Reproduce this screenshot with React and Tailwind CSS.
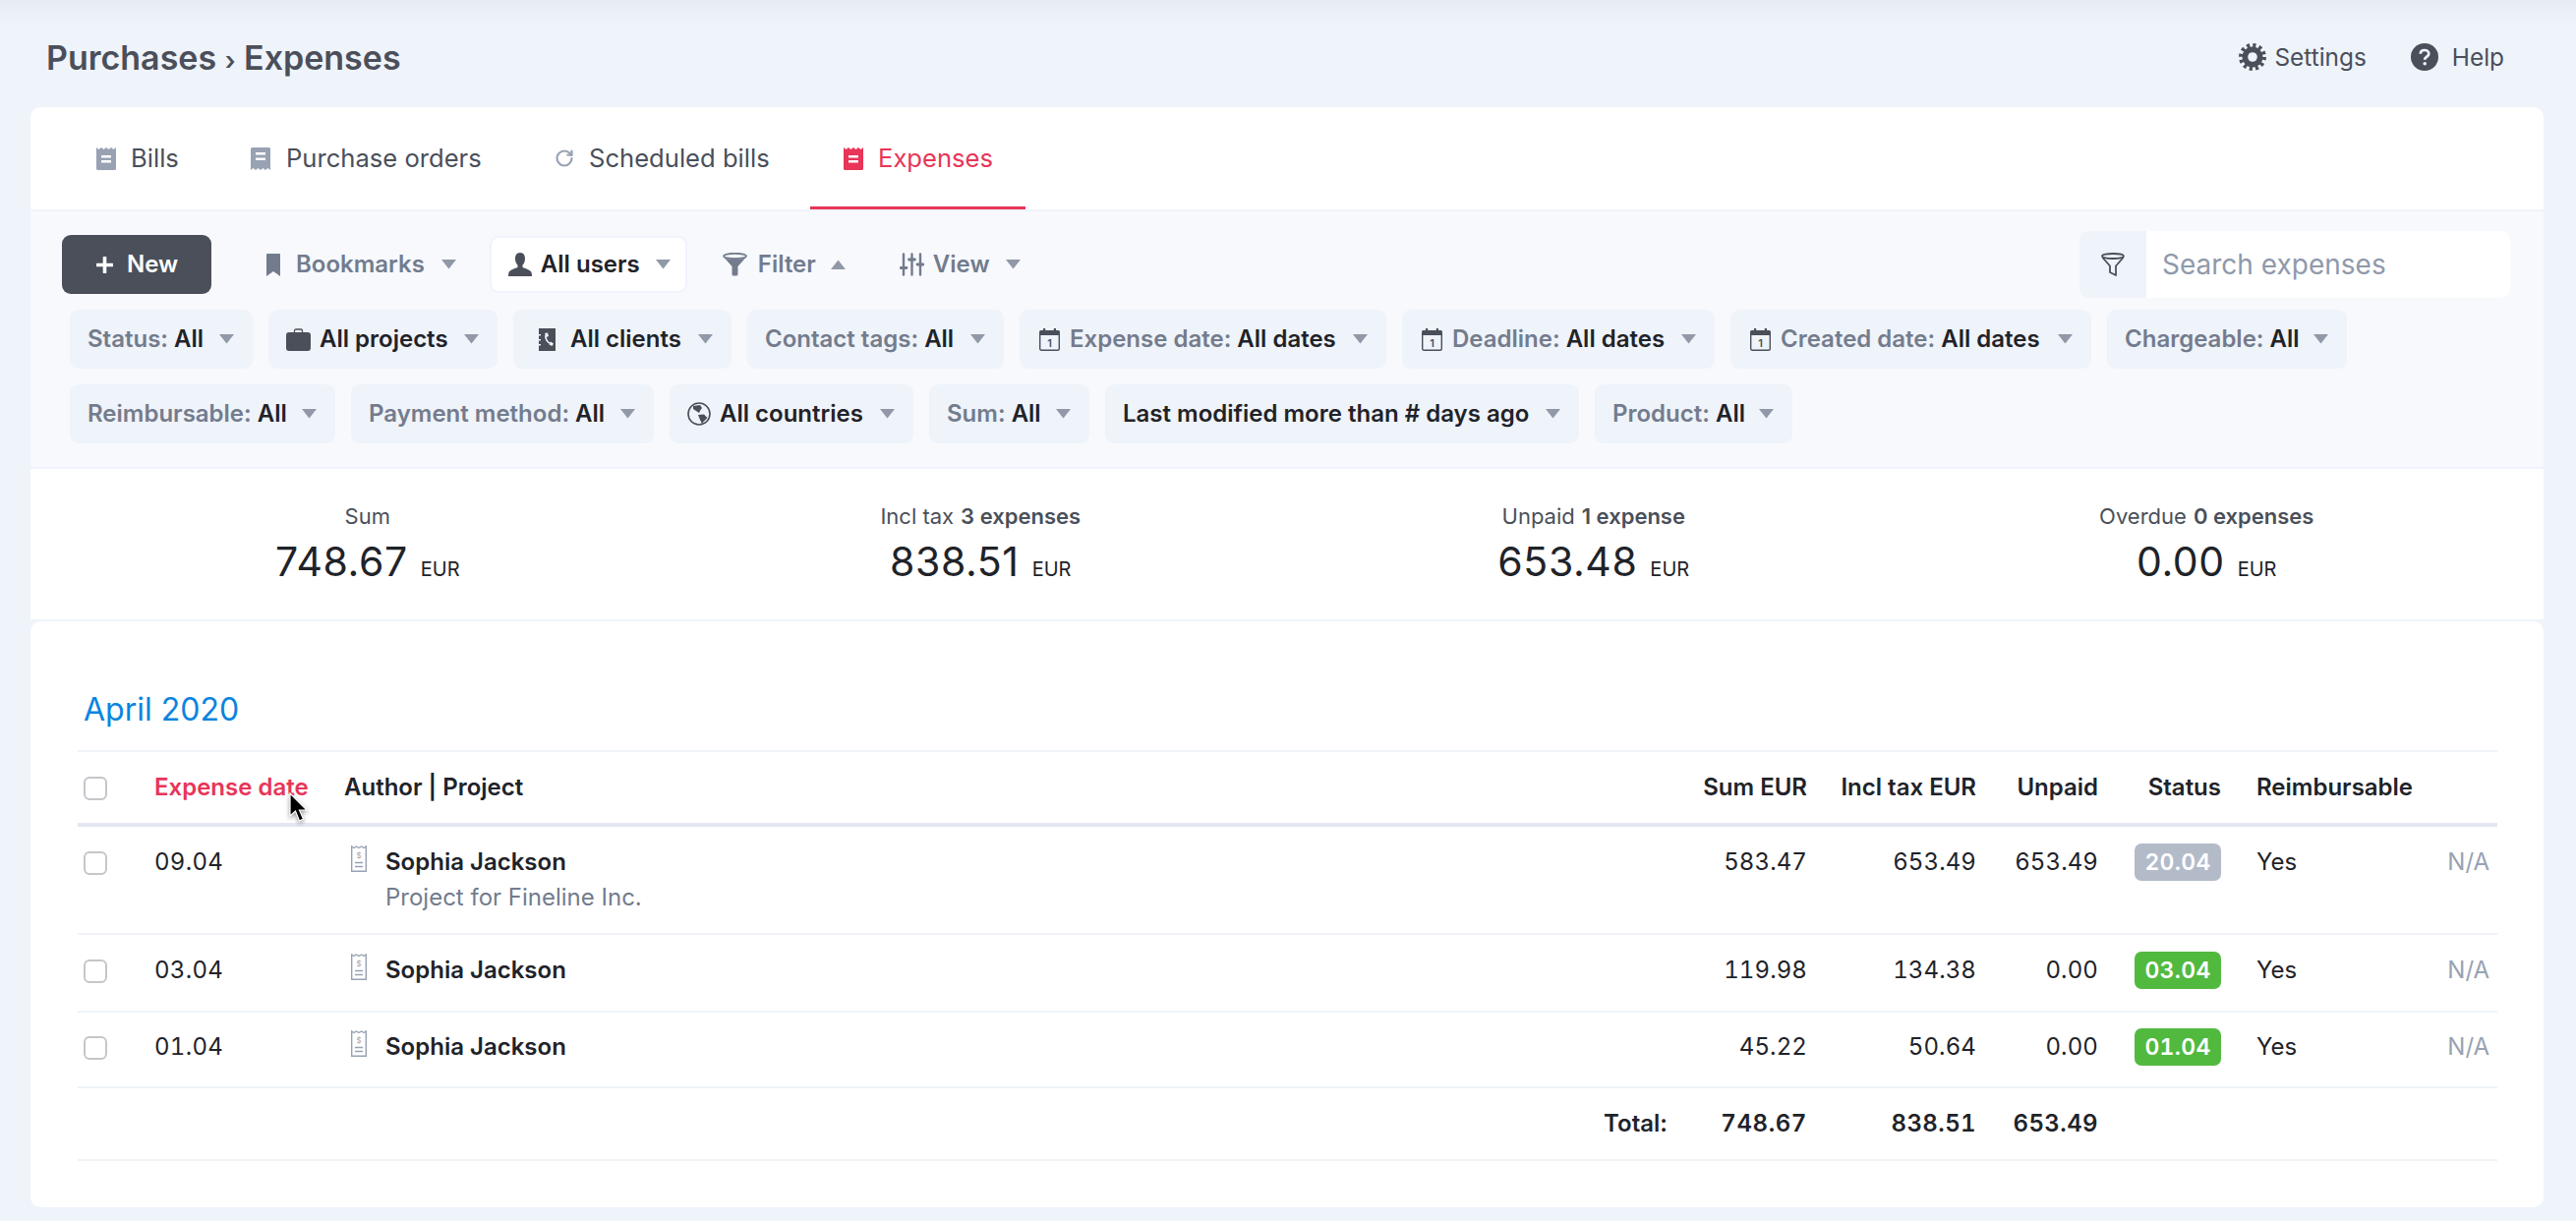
import React from "react";
import { RotateCw } from "lucide-react";

const Caret = ({ up, className = "" }) => (
  <svg viewBox="0 0 15 10" className={`w-[15px] h-[10px] shrink-0 ${className}`}>
    <path d={up ? "M7.5 0.5 L15 10 H0 Z" : "M0 0 H15 L7.5 9.5 Z"} fill="#9198a7" />
  </svg>
);

const ReceiptTop = ({ color = "#98a2b3", className = "" }) => (
  <svg viewBox="0 0 20 23" className={`w-[20px] h-[23px] shrink-0 ${className}`}>
    <path fillRule="evenodd" fill={color} d="M0 0 L2.5 2 L5 0 L7.5 2 L10 0 L12.5 2 L15 0 L17.5 2 L20 0 V21.5 Q20 23 18.500 23 H1.500 Q0 23 0 21.500 Z M5 8 V10.500 H15 V8 Z M5 13 V15.500 H15 V13 Z" />
  </svg>
);

const ReceiptBottom = ({ color = "#98a2b3", className = "" }) => (
  <svg viewBox="0 0 20 23" className={`w-[20px] h-[23px] shrink-0 ${className}`}>
    <path fillRule="evenodd" fill={color} d="M1.500 0 H18.500 Q20 0 20 1.500 V23 L17.500 21 L15 23 L12.500 21 L10 23 L7.500 21 L5 23 L2.500 21 L0 23 V1.500 Q0 0 1.500 0 Z M5 5 V7.500 H15 V5 Z M5 10.500 V13 H15 V10.500 Z" />
  </svg>
);

const Bookmark = () => (
  <svg viewBox="0 0 14 23" className="w-[14px] h-[23px] shrink-0">
    <path d="M1 0 H13 Q14 0 14 1 V23 L7 18 L0 23 V1 Q0 0 1 0 Z" fill="#737c8d" />
  </svg>
);

const User = () => (
  <svg viewBox="0 0 24 24" className="w-[24px] h-[24px] shrink-0">
    <path d="M12 0 C8.500 0 7 2.800 7 6 C7 9 8.200 11.500 9.500 12.800 V15 C6 16.500 1.500 17.500 0.500 20 Q0 22 0 24 H24 Q24 22 23.500 20 C22.500 17.500 18 16.500 14.500 15 V12.800 C15.800 11.500 17 9 17 6 C17 2.800 15.500 0 12 0 Z" fill="#4a4f5a" />
  </svg>
);

const FunnelFilled = () => (
  <svg viewBox="0 0 25 24" className="w-[25px] h-[24px] shrink-0">
    <ellipse cx="12.500" cy="3.500" rx="11.500" ry="2.700" fill="none" stroke="#737c8d" strokeWidth="1.800" />
    <path d="M1.500 5 C5 7.500 20 7.500 23.500 5 L15.500 14 V22 Q15.500 23.500 14 23.500 H11 Q9.500 23.500 9.500 22 V14 Z" fill="#737c8d" />
  </svg>
);

const FunnelOutline = () => (
  <svg viewBox="0 0 24 24" className="w-[24px] h-[24px] shrink-0" fill="none" stroke="#4a4f5a" strokeWidth="1.800" strokeLinejoin="round">
    <ellipse cx="12" cy="3.500" rx="11" ry="2.500" />
    <path d="M1.500 5 L9 13.500 V20 L15 23 V13.500 L22.500 5" />
  </svg>
);

const Sliders = () => (
  <svg viewBox="0 0 25 24" className="w-[25px] h-[24px] shrink-0" fill="none" stroke="#737c8d" strokeWidth="2.400" strokeLinecap="round">
    <path d="M4 1.500 V22.500 M12.500 1.500 V22.500 M21 1.500 V22.500" />
    <path d="M1 15.500 H7 M9.500 7 H15.500 M18 12 H24" strokeWidth="2.800" />
  </svg>
);

const Briefcase = () => (
  <svg viewBox="0 0 25 23" className="w-[25px] h-[23px] shrink-0">
    <path d="M8.500 4.500 V2.500 Q8.500 1 10 1 H15 Q16.500 1 16.500 2.500 V4.500" fill="none" stroke="#4a4f5a" strokeWidth="1.300" />
    <rect x="0" y="4" width="25" height="19" rx="3" fill="#4a4f5a" />
  </svg>
);

const ContactBook = () => (
  <svg viewBox="0 0 17 23" className="w-[17px] h-[23px] shrink-0">
    <path fill="#4a4f5a" d="M0 0 H17 V23 H0 V17.500 H2 V16 H0 V12.500 H2 V11 H0 V7.500 H2 V6 H0 Z" />
    <path fill="none" stroke="#eff3fa" strokeWidth="1.700" d="M7 7 C6.500 11 9 15 13 16" />
    <path fill="#eff3fa" d="M6 5 L9 4.500 L10 8 L7.500 9 Z M10.500 16.500 L12 13.500 L15 15.500 L13.500 18 Z" />
  </svg>
);

const Calendar = () => (
  <svg viewBox="0 0 21 23" className="w-[21px] h-[23px] shrink-0">
    <rect x="0.700" y="2.700" width="19.600" height="19.600" rx="1.500" fill="none" stroke="#4a4f5a" strokeWidth="1.400" />
    <path d="M0.500 3 Q0.500 2 2 2 H19 Q20.500 2 20.500 3 V7 H0.500 Z" fill="#4a4f5a" />
    <rect x="4" y="0" width="2.200" height="4" fill="#4a4f5a" />
    <rect x="14.800" y="0" width="2.200" height="4" fill="#4a4f5a" />
    <text x="10.500" y="19" textAnchor="middle" fontSize="11" fill="#4a4f5a" fontFamily="Inter, sans-serif">1</text>
  </svg>
);

const Globe = () => (
  <svg viewBox="0 0 24 24" className="w-[24px] h-[24px] shrink-0">
    <circle cx="12" cy="12" r="11" fill="none" stroke="#4a4f5a" strokeWidth="1.600" />
    <path fill="#4a4f5a" d="M6 4 L13 3 L15 6 L13.500 8 L12 11 L9 9 L6 7 Z M11 13 L17 12.500 L20.500 16 L16.500 20 L15 22 L13 18 Z" />
  </svg>
);

const Gear = () => (
  <svg viewBox="0 0 28 28" className="w-[28px] h-[28px] shrink-0">
    <circle cx="14" cy="14" r="12" fill="none" stroke="#4a4f5a" strokeWidth="4" strokeDasharray="3.140 3.140" />
    <circle cx="14" cy="14" r="10.500" fill="#4a4f5a" />
    <circle cx="14" cy="14" r="4.800" fill="#eff3fa" />
  </svg>
);

const HelpIcon = () => (
  <svg viewBox="0 0 28 28" className="w-[28px] h-[28px] shrink-0">
    <circle cx="14" cy="14" r="14" fill="#4a4f5a" />
    <path d="M9.800 10.800 C9.800 8.300 11.700 7 14 7 C16.500 7 18.300 8.500 18.300 10.700 C18.300 13.600 14.200 13.800 14.200 16.800" fill="none" stroke="#eff3fa" strokeWidth="2.700" />
    <circle cx="14.200" cy="20.800" r="1.800" fill="#eff3fa" />
  </svg>
);

const ExpenseIcon = () => (
  <svg viewBox="0 0 16 27" className="w-[16px] h-[27px] shrink-0 mt-[1px]" fill="none" stroke="#98a2b3" strokeWidth="1.400">
    <path d="M0.700 1 L3 2.500 L5.300 1 L8 2.500 L10.700 1 L13 2.500 L15.300 1 V26.300 H0.700 Z" />
    <path d="M4 17.500 H12 M4 21.500 H12" />
    <text x="8" y="13" textAnchor="middle" fontSize="8" fill="#98a2b3" stroke="none" fontFamily="Inter, sans-serif">$</text>
  </svg>
);

const Chip = ({ w, label, value, icon, gap = "gap-[10px]", pl = "pl-[18px]" }) => (
  <div className={`h-[60px] ${w} ${pl} pr-[19px] shrink-0 rounded-[9px] bg-[#eff3fa] flex items-center justify-between`}>
    <div className={`flex items-center ${gap} text-[24px] font-semibold whitespace-nowrap`}>
      {icon}
      <span>
        {label && <span className="text-[#737c8d]">{label} </span>}
        <span className="text-[#1f2329]">{value}</span>
      </span>
    </div>
    <Caret />
  </div>
);

const Stat = ({ label, strong, value }) => (
  <div className="flex flex-col items-center">
    <div className="h-[30px] flex items-center text-[22px] text-[#4a4f5a] whitespace-nowrap">
      <span>{label}</span>
      {strong && <span className="font-semibold ml-[7px]">{strong}</span>}
    </div>
    <div className="mt-[6px] h-[52px] flex items-center whitespace-nowrap text-[#1f2329]">
      <span className="text-[41px] tracking-[0.6px]">{value}</span>
      <span className="text-[20px] ml-[13px] mt-[13px]">EUR</span>
    </div>
  </div>
);

const GRID = "grid grid-cols-[78px_193px_1346px_142px_172px_124px_125px_281px] w-[2461px]";

const Row = ({ date, badge, badgeCls, sum, tax, unpaid, sub, h, pt, border = true }) => (
  <div className={`${GRID} ${h} ${pt} ${border ? "border-b-2 border-[#eff3f8]" : ""} text-[24px] text-[#1f2329]`}>
    <div className="h-[36px] flex items-center pl-[6px]"><span className="block w-[24px] h-[24px] mt-[2px] rounded-[6px] border-2 border-[#c4c6ca] bg-white" /></div>
    <div className="h-[36px] flex items-center tracking-[0.3px] tabular-nums">{date}</div>
    <div className="flex pl-[7px]">
      <ExpenseIcon />
      <div className="ml-[19px]">
        <div className="h-[36px] flex items-center font-semibold">Sophia Jackson</div>
        {sub && <div className="h-[36px] flex items-center text-[#737c8d]">{sub}</div>}
      </div>
    </div>
    <div className="h-[36px] flex items-center justify-end tracking-[0.1px] tabular-nums">{sum}</div>
    <div className="h-[36px] flex items-center justify-end tracking-[0.1px] tabular-nums">{tax}</div>
    <div className="h-[36px] flex items-center justify-end tracking-[0.1px] tabular-nums">{unpaid}</div>
    <div className="h-[36px] flex items-center justify-end">
      <span className={`w-[88px] h-[38px] rounded-[7px] flex items-center justify-center text-white font-semibold text-[23px] tracking-[0.3px] tabular-nums ${badgeCls}`}>{badge}</span>
    </div>
    <div className="h-[36px] flex items-center justify-between pl-[36px] pr-[8px]">
      <span>Yes</span>
      <span className="text-[#98a2b3]">N/A</span>
    </div>
  </div>
);

export default function App() {
  return (
    <div className="relative w-[2620px] h-[1242px] overflow-hidden bg-[#eff3fa] [font-family:Inter,sans-serif]">
      <div className="absolute left-0 top-0 w-full h-[26px] bg-gradient-to-b from-[#e7ebf3] to-[#eff3fa]" />
      <header className="relative h-[109px] flex items-center justify-between pl-[47px] pr-[73px] pt-[8px]">
        <h1 className="text-[34px] font-semibold text-[#4a4f5a] whitespace-nowrap">Purchases <span className="text-[26px]">›</span> Expenses</h1>
        <div className="flex items-center text-[24.4px] text-[#4a4f5a]">
          <Gear />
          <span className="ml-[8px]">Settings</span>
          <span className="ml-[45px]"><HelpIcon /></span>
          <span className="ml-[14px]">Help</span>
        </div>
      </header>

      <main className="ml-[31px] w-[2556px]">
        <nav className="h-[104px] bg-white rounded-t-[10px] flex pl-[33px] gap-[7px] text-[25.6px] text-[#4a4f5a]">
          <a className="h-full w-[150px] pl-[34px] flex items-center gap-[15px]"><ReceiptTop /><span>Bills</span></a>
          <a className="h-full w-[302px] pl-[34px] flex items-center gap-[16px]"><ReceiptBottom /><span>Purchase orders</span></a>
          <a className="h-full w-[287px] pl-[34px] flex items-center gap-[15px]"><RotateCw size={20} color="#98a2b3" strokeWidth={2.6} /><span>Scheduled bills</span></a>
          <a className="h-full w-[219px] pl-[34px] pt-[3px] flex items-center gap-[15px] text-[#e83558] border-b-[3px] border-[#e83558]"><ReceiptTop color="#e83558" /><span>Expenses</span></a>
        </nav>

        <section className="h-[264px] bg-[#f7f9fd] border-t-2 border-[#f0f3fa] border-b-2 relative">
          <div className="absolute left-[32px] top-[24px] flex items-center h-[60px] text-[24px] font-semibold">
            <button className="w-[152px] h-[60px] rounded-[9px] bg-[#4a4f5a] text-white flex items-center pl-[35px] gap-[14px]">
              <svg viewBox="0 0 17 17" className="w-[17px] h-[17px]"><path d="M8.500 1 V16 M1 8.500 H16" stroke="#fff" strokeWidth="3.600" strokeLinecap="round" /></svg>
              <span>New</span>
            </button>
            <div className="ml-[56px] flex items-center text-[#737c8d]"><Bookmark /><span className="ml-[16px]">Bookmarks</span><Caret className="ml-[17px]" /></div>
            <div className="ml-[34px] w-[201px] h-[58px] rounded-[9px] bg-white border-2 border-[#f0f3fa] flex items-center pl-[17px] text-[#1f2329]"><User /><span className="ml-[9px]">All users</span><Caret className="ml-[16px]" /></div>
            <div className="ml-[36px] flex items-center text-[#737c8d]"><FunnelFilled /><span className="ml-[11px]">Filter</span><Caret up className="ml-[15px]" /></div>
            <div className="ml-[55px] flex items-center text-[#737c8d]"><Sliders /><span className="ml-[9px]">View</span><Caret className="ml-[16px]" /></div>
          </div>

          <div className="absolute left-[2084px] top-[20px] w-[438px] h-[68px] rounded-[9px] bg-white flex items-center overflow-hidden">
            <div className="w-[68px] h-full bg-[#eff3fa] flex items-center justify-center"><FunnelOutline /></div>
            <span className="ml-[16px] text-[28px] text-[#8f99ab]">Search expenses</span>
          </div>

          <div className="absolute left-[40px] top-[100px] flex gap-[16px]">
            <Chip w="w-[186px]" label="Status:" value="All" />
            <Chip w="w-[233px]" value="All projects" icon={<Briefcase />} gap="gap-[9px]" />
            <Chip w="w-[222px]" value="All clients" icon={<ContactBook />} gap="gap-[15px]" pl="pl-[26px]" />
            <Chip w="w-[261px]" label="Contact tags:" value="All" />
            <Chip w="w-[373px]" label="Expense date:" value="All dates" icon={<Calendar />} pl="pl-[20px]" />
            <Chip w="w-[318px]" label="Deadline:" value="All dates" icon={<Calendar />} pl="pl-[20px]" />
            <Chip w="w-[367px]" label="Created date:" value="All dates" icon={<Calendar />} pl="pl-[20px]" />
            <Chip w="w-[244px]" label="Chargeable:" value="All" />
          </div>
          <div className="absolute left-[40px] top-[176px] flex gap-[16px]">
            <Chip w="w-[270px]" label="Reimbursable:" value="All" />
            <Chip w="w-[308px]" label="Payment method:" value="All" />
            <Chip w="w-[248px]" value="All countries" icon={<Globe />} gap="gap-[9px]" />
            <Chip w="w-[163px]" label="Sum:" value="All" />
            <Chip w="w-[482px]" value="Last modified more than # days ago" />
            <Chip w="w-[201px]" label="Product:" value="All" />
          </div>
        </section>

        <section className="h-[153px] bg-white px-[31px] pt-[33px] grid grid-cols-4">
          <Stat label="Sum" value="748.67" />
          <Stat label="Incl tax" strong="3 expenses" value="838.51" />
          <Stat label="Unpaid" strong="1 expense" value="653.48" />
          <Stat label="Overdue" strong="0 expenses" value="0.00" />
        </section>

        <section className="mt-[2px] h-[596px] bg-white rounded-[10px] pl-[48px]">
          <h2 className="h-[131px] pt-[70px] pl-[6px] text-[32px] leading-[40px] text-[#0b84de]">April 2020</h2>
          <div className={`${GRID} h-[78px] border-t-2 border-[#eff3f8] border-b-4 border-b-[#e3e7ef] items-center text-[24px] font-semibold text-[#1f2329]`}>
            <div className="pl-[6px]"><span className="block w-[24px] h-[24px] mt-[2px] rounded-[6px] border-2 border-[#c4c6ca] bg-white" /></div>
            <div className="text-[#e83558]">Expense date</div>
            <div>Author | Project</div>
            <div className="text-right">Sum EUR</div>
            <div className="text-right">Incl tax EUR</div>
            <div className="text-right">Unpaid</div>
            <div className="text-right">Status</div>
            <div className="pl-[36px]">Reimbursable</div>
          </div>
          <Row date="09.04" sum="583.47" tax="653.49" unpaid="653.49" badge="20.04" badgeCls="bg-[#b3bbc9]" sub="Project for Fineline Inc." h="h-[110px]" pt="pt-[18px]" />
          <Row date="03.04" sum="119.98" tax="134.38" unpaid="0.00" badge="03.04" badgeCls="bg-[#52b93f]" h="h-[79px]" pt="pt-[18px]" />
          <Row date="01.04" sum="45.22" tax="50.64" unpaid="0.00" badge="01.04" badgeCls="bg-[#52b93f]" h="h-[77px]" pt="pt-[17px]" />
          <div className={`${GRID} h-[74px] pt-[18px] border-b-2 border-[#eff3f8] text-[24px] font-semibold text-[#1f2329]`}>
            <div />
            <div />
            <div className="h-[36px] flex items-center justify-end">Total:</div>
            <div className="h-[36px] flex items-center justify-end tracking-[0.6px] tabular-nums">748.67</div>
            <div className="h-[36px] flex items-center justify-end tracking-[0.4px] tabular-nums">838.51</div>
            <div className="h-[36px] flex items-center justify-end tracking-[0.4px] tabular-nums">653.49</div>
            <div />
            <div />
          </div>
        </section>
      </main>

      <svg viewBox="0 0 20 32" className="absolute left-[294px] top-[806px] w-[20px] h-[32px] drop-shadow-[0_2px_2px_rgba(0,0,0,0.4)]">
        <path d="M1 1 V24 L6.500 19 L10.500 29 L14.500 27 L10.500 18 L18 18 Z" fill="#000" stroke="#fff" strokeWidth="1.200" />
      </svg>
    </div>
  );
}
